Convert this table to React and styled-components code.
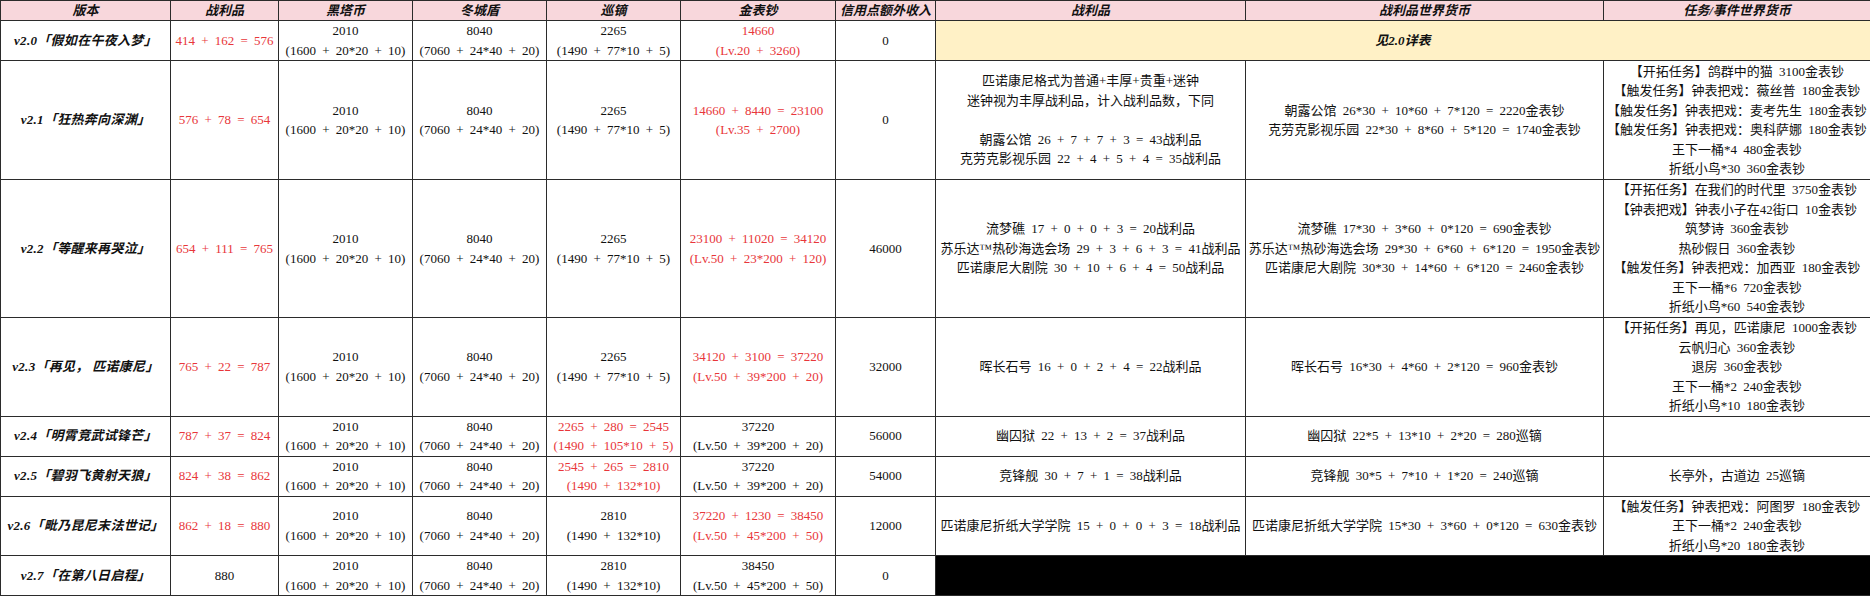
import React from "react";
import styled, { createGlobalStyle } from "styled-components";

const GlobalStyle = createGlobalStyle`
    body {
        margin: 0;
        background: #ffffff;
        font-family: "Liberation Serif", "Noto Sans CJK SC", serif;
    }
`;

// Styled Components
const Sheet = styled.table`
    width: 1870px;
    table-layout: fixed;
    border-collapse: collapse;
    font-size: 13px;
    line-height: 19.5px;
    color: #111;
    word-spacing: 3px;
`;

const Row = styled.tr`
    height: ${({ $h }) => $h}px;
`;

const HeadCell = styled.th`
    background: #f8d7dc;
    border: 1px solid #2b2b2b;
    font-weight: bold;
    font-style: italic;
    padding: 0;
    height: 19px;
    line-height: 19px;
    text-align: center;
    white-space: nowrap;
    overflow: hidden;
`;

const Cell = styled.td`
    border: 1px solid #2b2b2b;
    padding: 0 2px;
    text-align: center;
    vertical-align: middle;
    white-space: nowrap;
    color: ${({ $red }) => ($red ? "#e8363a" : "#111")};
`;

const VersionCell = styled(Cell)`
    font-weight: bold;
    font-style: italic;
    word-spacing: 0;
    letter-spacing: 0.3px;
`;

const NoteCell = styled(Cell)`
    background: #fff1c6;
    font-weight: bold;
    font-style: italic;
`;

const BlackCell = styled(Cell)`
    background: #000;
`;

const Line = styled.div`
    height: 19.5px;
    line-height: 19.5px;
    overflow: visible;
`;

const columns = [170, 108, 134, 134, 134, 155, 100, 310, 358, 267];

const headers = [
    "版本",
    "战利品",
    "黑塔币",
    "冬城盾",
    "巡镝",
    "金表钞",
    "信用点额外收入",
    "战利品",
    "战利品世界货币",
    "任务/事件世界货币",
];

const tower = ["2010", "(1600 + 20*20 + 10)"];
const shield = ["8040", "(7060 + 24*40 + 20)"];

const rows = [
    {
        h: 39,
        ver: "v2.0「假如在午夜入梦」",
        loot: { red: true, lines: ["414 + 162 = 576"] },
        patrol: { lines: ["2265", "(1490 + 77*10 + 5)"] },
        gold: { red: true, lines: ["14660", "(Lv.20 + 3260)"] },
        credit: "0",
        note: "见2.0详表",
    },
    {
        h: 119,
        ver: "v2.1「狂热奔向深渊」",
        loot: { red: true, lines: ["576 + 78 = 654"] },
        patrol: { lines: ["2265", "(1490 + 77*10 + 5)"] },
        gold: { red: true, lines: ["14660 + 8440 = 23100", "(Lv.35 + 2700)"] },
        credit: "0",
        spoils: [
            "匹诺康尼格式为普通+丰厚+贵重+迷钟",
            "迷钟视为丰厚战利品，计入战利品数，下同",
            "",
            "朝露公馆 26 + 7 + 7 + 3 = 43战利品",
            "克劳克影视乐园 22 + 4 + 5 + 4 = 35战利品",
        ],
        world: [
            "朝露公馆 26*30 + 10*60 + 7*120 = 2220金表钞",
            "克劳克影视乐园 22*30 + 8*60 + 5*120 = 1740金表钞",
        ],
        quests: [
            "【开拓任务】鸽群中的猫 3100金表钞",
            "【触发任务】钟表把戏：薇丝普 180金表钞",
            "【触发任务】钟表把戏：麦考先生 180金表钞",
            "【触发任务】钟表把戏：奥科萨娜 180金表钞",
            "王下一桶*4 480金表钞",
            "折纸小鸟*30 360金表钞",
        ],
    },
    {
        h: 138,
        ver: "v2.2「等醒来再哭泣」",
        loot: { red: true, lines: ["654 + 111 = 765"] },
        patrol: { lines: ["2265", "(1490 + 77*10 + 5)"] },
        gold: { red: true, lines: ["23100 + 11020 = 34120", "(Lv.50 + 23*200 + 120)"] },
        credit: "46000",
        spoils: [
            "流梦礁 17 + 0 + 0 + 3 = 20战利品",
            "苏乐达™热砂海选会场 29 + 3 + 6 + 3 = 41战利品",
            "匹诺康尼大剧院 30 + 10 + 6 + 4 = 50战利品",
        ],
        world: [
            "流梦礁 17*30 + 3*60 + 0*120 = 690金表钞",
            "苏乐达™热砂海选会场 29*30 + 6*60 + 6*120 = 1950金表钞",
            "匹诺康尼大剧院 30*30 + 14*60 + 6*120 = 2460金表钞",
        ],
        quests: [
            "【开拓任务】在我们的时代里 3750金表钞",
            "【钟表把戏】钟表小子在42街口 10金表钞",
            "筑梦诗 360金表钞",
            "热砂假日 360金表钞",
            "【触发任务】钟表把戏：加西亚 180金表钞",
            "王下一桶*6 720金表钞",
            "折纸小鸟*60 540金表钞",
        ],
    },
    {
        h: 98,
        ver: "v2.3「再见， 匹诺康尼」",
        loot: { red: true, lines: ["765 + 22 = 787"] },
        patrol: { lines: ["2265", "(1490 + 77*10 + 5)"] },
        gold: { red: true, lines: ["34120 + 3100 = 37220", "(Lv.50 + 39*200 + 20)"] },
        credit: "32000",
        spoils: ["晖长石号 16 + 0 + 2 + 4 = 22战利品"],
        world: ["晖长石号 16*30 + 4*60 + 2*120 = 960金表钞"],
        quests: [
            "【开拓任务】再见，匹诺康尼 1000金表钞",
            "云帆归心 360金表钞",
            "退房 360金表钞",
            "王下一桶*2 240金表钞",
            "折纸小鸟*10 180金表钞",
        ],
    },
    {
        h: 39,
        ver: "v2.4「明霄竞武试锋芒」",
        loot: { red: true, lines: ["787 + 37 = 824"] },
        patrol: { red: true, lines: ["2265 + 280 = 2545", "(1490 + 105*10 + 5)"] },
        gold: { lines: ["37220", "(Lv.50 + 39*200 + 20)"] },
        credit: "56000",
        spoils: ["幽囚狱 22 + 13 + 2 = 37战利品"],
        world: ["幽囚狱 22*5 + 13*10 + 2*20 = 280巡镝"],
        quests: [],
    },
    {
        h: 39,
        ver: "v2.5「碧羽飞黄射天狼」",
        loot: { red: true, lines: ["824 + 38 = 862"] },
        patrol: { red: true, lines: ["2545 + 265 = 2810", "(1490 + 132*10)"] },
        gold: { lines: ["37220", "(Lv.50 + 39*200 + 20)"] },
        credit: "54000",
        spoils: ["竞锋舰 30 + 7 + 1 = 38战利品"],
        world: ["竞锋舰 30*5 + 7*10 + 1*20 = 240巡镝"],
        quests: ["长亭外，古道边 25巡镝"],
    },
    {
        h: 59,
        ver: "v2.6「毗乃昆尼末法世记」",
        loot: { red: true, lines: ["862 + 18 = 880"] },
        patrol: { lines: ["2810", "(1490 + 132*10)"] },
        gold: { red: true, lines: ["37220 + 1230 = 38450", "(Lv.50 + 45*200 + 50)"] },
        credit: "12000",
        spoils: ["匹诺康尼折纸大学学院 15 + 0 + 0 + 3 = 18战利品"],
        world: ["匹诺康尼折纸大学学院 15*30 + 3*60 + 0*120 = 630金表钞"],
        quests: [
            "【触发任务】钟表把戏：阿图罗 180金表钞",
            "王下一桶*2 240金表钞",
            "折纸小鸟*20 180金表钞",
        ],
    },
    {
        h: 40,
        ver: "v2.7「在第八日启程」",
        loot: { lines: ["880"] },
        patrol: { lines: ["2810", "(1490 + 132*10)"] },
        gold: { lines: ["38450", "(Lv.50 + 45*200 + 50)"] },
        credit: "0",
        blank: true,
    },
];

const Lines = ({ lines }) =>
    lines.map((text, i) => <Line key={i}>{text || "\u00a0"}</Line>);

const App = () => {
    return (
        <>
            <GlobalStyle />
            <Sheet>
                <colgroup>
                    {columns.map((w, i) => (
                        <col key={i} style={{ width: w }} />
                    ))}
                </colgroup>
                <thead>
                    <tr>
                        {headers.map((h, i) => (
                            <HeadCell key={i}>{h}</HeadCell>
                        ))}
                    </tr>
                </thead>
                <tbody>
                    {rows.map((r) => (
                        <Row key={r.ver} $h={r.h}>
                            <VersionCell>
                                <Line>{r.ver}</Line>
                            </VersionCell>
                            <Cell $red={r.loot.red}>
                                <Lines lines={r.loot.lines} />
                            </Cell>
                            <Cell>
                                <Lines lines={tower} />
                            </Cell>
                            <Cell>
                                <Lines lines={shield} />
                            </Cell>
                            <Cell $red={r.patrol.red}>
                                <Lines lines={r.patrol.lines} />
                            </Cell>
                            <Cell $red={r.gold.red}>
                                <Lines lines={r.gold.lines} />
                            </Cell>
                            <Cell>
                                <Line>{r.credit}</Line>
                            </Cell>
                            {r.note && (
                                <NoteCell colSpan={3}>
                                    <Line>{r.note}</Line>
                                </NoteCell>
                            )}
                            {r.blank && <BlackCell colSpan={3} />}
                            {r.spoils && (
                                <>
                                    <Cell>
                                        <Lines lines={r.spoils} />
                                    </Cell>
                                    <Cell>
                                        <Lines lines={r.world} />
                                    </Cell>
                                    <Cell>
                                        <Lines lines={r.quests} />
                                    </Cell>
                                </>
                            )}
                        </Row>
                    ))}
                </tbody>
            </Sheet>
        </>
    );
};

export default App;
